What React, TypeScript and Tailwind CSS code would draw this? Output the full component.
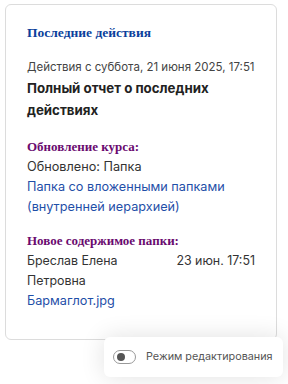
const serif = "font-['Liberation_Serif',serif]"

function ToggleOff() {
  return (
    <span className="relative inline-flex h-[14px] w-[23px] items-center rounded-full border-[1.5px] border-[#999] bg-white">
      <span className="ml-[2.5px] h-[8px] w-[8px] rounded-full bg-[#555]" />
    </span>
  )
}

export default function App() {
  return (
    <div className="relative h-[384px] w-[288px] overflow-hidden bg-white font-['Inter',sans-serif] text-[#333]">
      <div className="ml-[5px] mt-[4px] h-[336px] w-[272px] rounded-[6px] border border-[#dcdcdc] px-[21px] pt-[18px]">
        <h2 className={`${serif} text-[13.5px] font-bold leading-[20px] text-[#0b3f9c]`}>Последние действия</h2>

        <div className="mt-[15px] whitespace-nowrap text-[11.5px] leading-[18px] text-[#444]">Действия с суббота, 21 июня 2025, 17:51</div>
        <h3 className="mt-px text-[13.3px] font-bold leading-[22px] text-[#222]">Полный отчет о последних действиях</h3>

        <div className="mt-[16px]">
          <div className={`${serif} text-[13px] font-bold leading-[20px] text-[#6a0a6f]`}>Обновление курса:</div>
          <div className="text-[12.7px] leading-[20px]">Обновлено: Папка</div>
          <a className="block text-[12.7px] leading-[20px] text-[#1f4fa8]">Папка со вложенными папками (внутренней иерархией)</a>
        </div>

        <div className="mt-[14px]">
          <div className={`${serif} text-[13px] font-bold leading-[20px] text-[#6a0a6f]`}>Новое содержимое папки:</div>
          <div className="flex justify-between text-[12.4px] leading-[20px]">
            <span className="w-[110px]">Бреслав Елена Петровна</span>
            <span>23 июн. 17:51</span>
          </div>
          <a className="block text-[12.7px] leading-[20px] text-[#1f4fa8]">Бармаглот.jpg</a>
        </div>
      </div>

      <div className="absolute left-[104px] top-[337px] flex h-[40px] w-[179px] items-center gap-[10px] rounded-[6px] bg-white pl-[9px] shadow-[0_0_24px_rgba(0,0,0,0.12)]">
        <ToggleOff />
        <span className="text-[10.8px] text-[#555]">Режим редактирования</span>
      </div>
    </div>
  )
}
